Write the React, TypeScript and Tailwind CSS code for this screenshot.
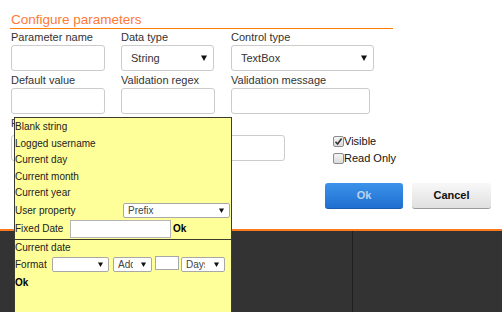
import React from 'react';

const Caret = ({ size = 6 }: { size?: number }) => (
  <svg width={size} height={size} viewBox="0 0 6 6" className="shrink-0">
    <polygon points="0,0.5 6,0.5 3,6" fill="#111" />
  </svg>
);

const Field = ({ className = '' }: { className?: string }) => (
  <div className={`h-[26px] rounded-[3px] border border-[#cccccc] bg-white ${className}`} />
);

const Select = ({ value, className = '' }: { value: string; className?: string }) => (
  <div
    className={`flex h-[26px] items-center justify-between rounded-[3px] border border-[#cccccc] bg-white pl-[9px] pr-[6px] text-[11px] text-[#333] ${className}`}
  >
    <span>{value}</span>
    <Caret />
  </div>
);

const MiniSelect = ({ value, className = '', textW }: { value: string; className?: string; textW?: string }) => (
  <div
    className={`flex h-[15px] items-center justify-between rounded-[2px] border border-[#a8a8a8] bg-white pl-[4px] pr-[5px] text-[10px] leading-none text-[#444] ${className}`}
  >
    <span className={`overflow-hidden whitespace-nowrap ${textW ?? ''}`}>{value}</span>
    <Caret size={5} />
  </div>
);

const CheckBox = ({ checked }: { checked?: boolean }) => (
  <div className="flex h-[11px] w-[11px] items-center justify-center rounded-[2px] border border-[#8c8c8c] bg-gradient-to-b from-[#f4f4f4] to-[#dcdcdc]">
    {checked && (
      <svg width="9" height="9" viewBox="0 0 9 9">
        <path d="M1.5 4.8 L3.6 7 L7.6 1.5" stroke="#333" strokeWidth="1.6" fill="none" />
      </svg>
    )}
  </div>
);

const Label = ({ children, className = '' }: { children: React.ReactNode; className?: string }) => (
  <div className={`h-[12px] text-[11px] leading-[12px] text-[#333] ${className}`}>{children}</div>
);

const valueSources = ['Blank string', 'Logged username', 'Current day', 'Current month', 'Current year'];

const DefaultValuePopup = () => (
  <div className="absolute left-[14px] top-[117px] h-[210px] w-[218px] border border-[#3b3b2e] bg-[#ffff99] pt-[1px] text-[10px] leading-none text-[#222]">
    {valueSources.map((s) => (
      <div key={s} className="flex h-[16.5px] items-center">
        {s}
      </div>
    ))}
    <div className="flex h-[18px] items-center justify-between pr-[1px]">
      <span>User property</span>
      <MiniSelect value="Prefix" className="w-[107px]" />
    </div>
    <div className="flex h-[20px] items-center border-b border-[#3b3b2e]">
      <span className="w-[55px]">Fixed Date</span>
      <div className="h-[18px] w-[101px] border border-[#b5b5b5] bg-white" />
      <span className="ml-[2px] font-bold text-black">Ok</span>
    </div>
    <div className="flex h-[16px] items-center">Current date</div>
    <div className="flex h-[18px] items-center">
      <span className="w-[37px]">Format</span>
      <MiniSelect value="" className="w-[57px]" />
      <MiniSelect value="Add" textW="w-[15px]" className="ml-[4px] w-[39px]" />
      <div className="mb-[3px] ml-[3px] h-[14px] w-[24px] border border-[#a8a8a8] bg-white" />
      <MiniSelect value="Days" textW="w-[19px]" className="ml-[2px] w-[44px]" />
    </div>
    <div className="flex h-[18px] items-center font-bold text-black">Ok</div>
  </div>
);

export default function App() {
  return (
    <div className="relative flex h-[312px] w-[502px] flex-col overflow-hidden bg-white font-['Liberation_Sans',Arial,sans-serif]">
      <div className="h-[229px] shrink-0">
        <div className="ml-[10px] h-[29px] w-[383px] border-b border-[#ff8000] pl-[1px] pt-[12px] text-[13.5px] leading-[16px] text-[#ff7a36]">
          Configure parameters
        </div>

        <div className="ml-[11px]">
          <div className="mt-[2px] flex">
            <Label className="w-[110px]">Parameter name</Label>
            <Label className="w-[110px]">Data type</Label>
            <Label>Control type</Label>
          </div>
          <div className="mt-[2px] flex">
            <Field className="w-[94px]" />
            <Select value="String" className="ml-[16px] w-[93px]" />
            <Select value="TextBox" className="ml-[17px] w-[143px]" />
          </div>

          <div className="mt-[3px] flex">
            <Label className="w-[110px]">Default value</Label>
            <Label className="w-[110px]">Validation regex</Label>
            <Label>Validation message</Label>
          </div>
          <div className="mt-[2px] flex">
            <Field className="w-[94px]" />
            <Field className="ml-[16px] w-[94px]" />
            <Field className="ml-[16px] w-[139px]" />
          </div>

          <Label className="mt-[3px]">Prefix</Label>
          <div className="mt-[6px] flex items-start">
            <Field className="w-[274px]" />
            <div className="-mt-[2px] ml-[48px] flex flex-col gap-[1px] text-[11px] text-[#111]">
              <div className="flex h-[16px] items-center">
                <CheckBox checked />
                <span>Visible</span>
              </div>
              <div className="flex h-[16px] items-center">
                <CheckBox />
                <span>Read Only</span>
              </div>
            </div>
          </div>
        </div>

        <div className="mr-[11px] mt-[17px] flex justify-end gap-[9px] text-[11px] font-bold">
          <button className="h-[26px] w-[78px] rounded-[3px] border-b border-[#1a5bb0] bg-gradient-to-b from-[#3c93ea] to-[#1f6ed0] text-[#bcd4f0]">
            Ok
          </button>
          <button className="h-[26px] w-[79px] rounded-[3px] border-b border-[#9a9a9a] bg-gradient-to-b from-[#f8f8f8] to-[#e0e0e0] text-[#111]">
            Cancel
          </button>
        </div>
      </div>

      <div className="flex flex-1 border-t-2 border-[#fb7a1e] bg-[#333333]">
        <div className="w-[353px] border-r border-[#1e1e1e]" />
      </div>

      <DefaultValuePopup />
    </div>
  );
}
